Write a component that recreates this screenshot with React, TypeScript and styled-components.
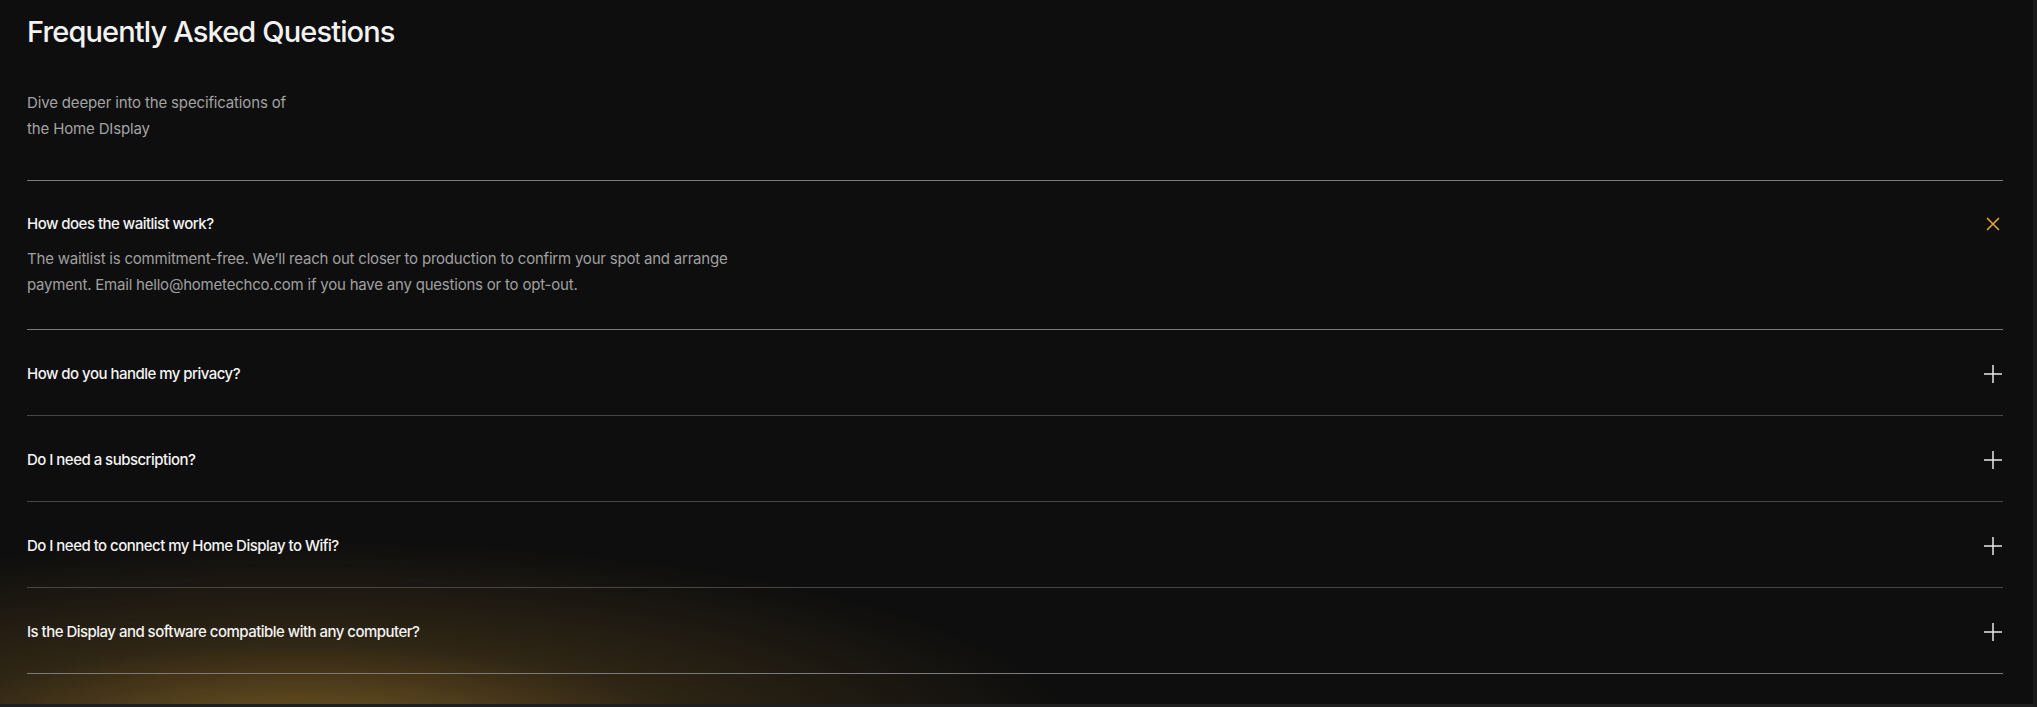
import React, { useState } from "react";
import styled, { createGlobalStyle, css } from "styled-components";

const GlobalStyle = createGlobalStyle`
  * { box-sizing: border-box; }
  html, body { margin: 0; padding: 0; background: #0e0e0e; }
  body { font-family: Inter, "Noto Sans", sans-serif; -webkit-font-smoothing: antialiased; }
`;

const Page = styled.main`
  height: 707px;
  overflow: hidden;
  background:
    radial-gradient(ellipse 780px 200px at 300px 740px, rgba(125, 94, 36, 0.95), rgba(84, 64, 27, 0.45) 50%, rgba(14, 14, 14, 0) 100%),
    #0e0e0e;
  border-right: 4px solid #1a1a1a;
  border-bottom: 3px solid rgba(255, 255, 255, 0.07);
  padding: 14px 30px 0 27px;
`;

const Title = styled.h1`
  margin: 0;
  font-size: 29px;
  line-height: 35px;
  font-weight: 500;
  letter-spacing: -0.03em;
  color: #f2f2f2;
`;

const Subtitle = styled.p`
  margin: 41px 0 0;
  font-size: 15px;
  line-height: 26px;
  letter-spacing: -0.01em;
  color: #a3a3a3;
  width: 300px;
`;

const List = styled.div`
  margin-top: 38px;
  display: flex;
  flex-direction: column;
`;

const Item = styled.div<{ $light: boolean; $first: boolean }>`
  border-bottom: 1px solid ${(p) => (p.$light ? "#7a7a7a" : "#464646")};
  ${(p) =>
    p.$first &&
    css`
      border-top: 1px solid #7a7a7a;
    `}
`;

const Header = styled.button<{ $open: boolean }>`
  all: unset;
  display: flex;
  align-items: center;
  justify-content: space-between;
  width: 100%;
  padding: ${(p) => (p.$open ? "33px 0 12px" : "34px 0 31px")};
  cursor: pointer;
`;

const Question = styled.span`
  font-size: 15px;
  line-height: 20px;
  font-weight: 450;
  letter-spacing: -0.035em;
  color: #f4f4f4;
`;

const IconBox = styled.span`
  width: 18px;
  height: 18px;
  display: flex;
  align-items: center;
  justify-content: center;
  margin-right: 1px;
`;

const Answer = styled.p`
  margin: 0;
  padding: 0 0 31px;
  font-size: 15px;
  line-height: 26px;
  letter-spacing: -0.014em;
  color: #a0a0a0;
  max-width: 720px;
`;

const PlusIcon = () => (
  <svg width="18" height="18" viewBox="0 0 18 18" fill="none">
    <path d="M9 0v18M0 9h18" stroke="#e8e8e8" strokeWidth="1.5" />
  </svg>
);

const CloseIcon = () => (
  <svg width="14" height="14" viewBox="0 0 14 14" fill="none">
    <path d="M1 1l12 12M13 1L1 13" stroke="#e0a533" strokeWidth="1.6" />
  </svg>
);

const faqs = [
  {
    q: "How does the waitlist work?",
    a: "The waitlist is commitment-free. We’ll reach out closer to production to confirm your spot and arrange payment. Email hello@hometechco.com if you have any questions or to opt-out.",
  },
  { q: "How do you handle my privacy?", a: "" },
  { q: "Do I need a subscription?", a: "" },
  { q: "Do I need to connect my Home Display to Wifi?", a: "" },
  { q: "Is the Display and software compatible with any computer?", a: "" },
];

export default function App() {
  const [open, setOpen] = useState(0);
  return (
    <>
      <GlobalStyle />
      <Page>
        <Title>Frequently Asked Questions</Title>
        <Subtitle>
          Dive deeper into the specifications of
          <br />
          the Home DIsplay
        </Subtitle>
        <List>
          {faqs.map((f, i) => {
            const isOpen = open === i;
            return (
              <Item key={f.q} $first={i === 0} $light={isOpen || i === faqs.length - 1}>
                <Header $open={isOpen} onClick={() => setOpen(isOpen ? -1 : i)}>
                  <Question>{f.q}</Question>
                  <IconBox>{isOpen ? <CloseIcon /> : <PlusIcon />}</IconBox>
                </Header>
                {isOpen && <Answer>{f.a}</Answer>}
              </Item>
            );
          })}
        </List>
      </Page>
    </>
  );
}
